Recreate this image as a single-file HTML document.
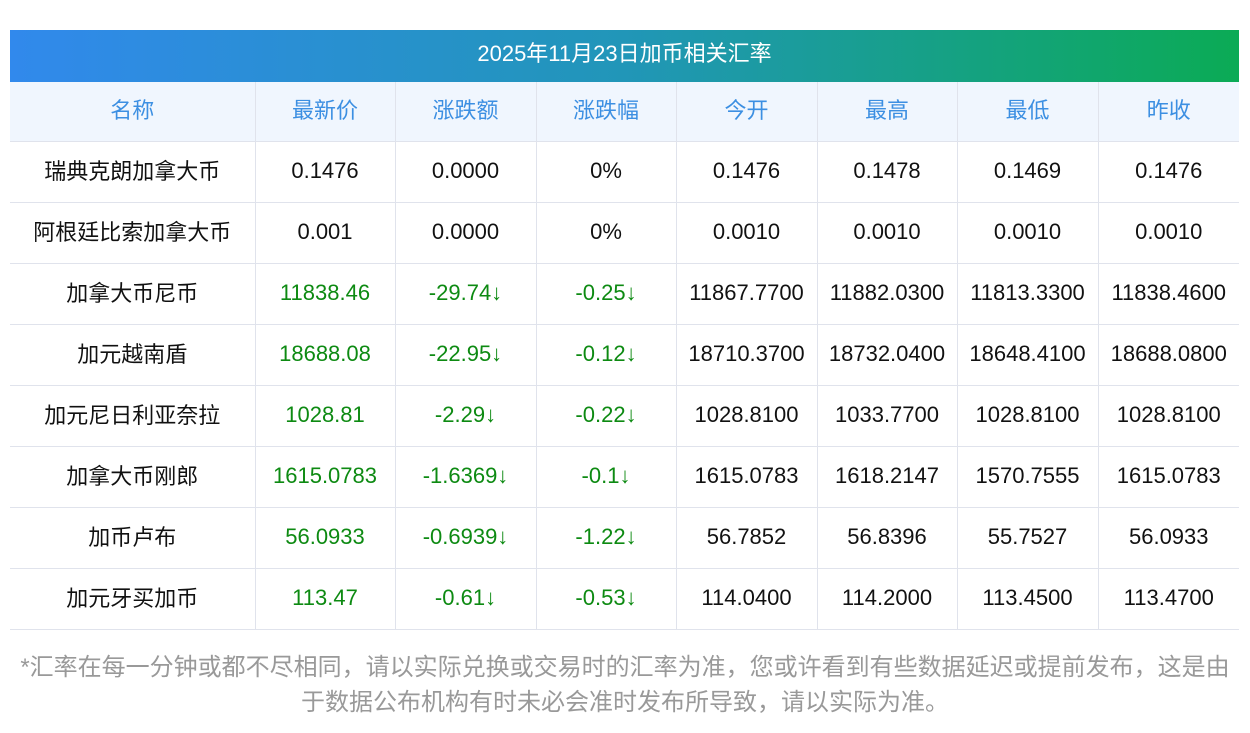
<!DOCTYPE html>
<html><head><meta charset="utf-8"><style>
body{margin:0;background:#fff;width:1250px;height:733px;overflow:hidden;font-family:"Liberation Sans","Noto Sans CJK SC",sans-serif;}
.title{position:absolute;left:10px;top:30px;width:1229px;height:52px;background:linear-gradient(90deg,#3189ec,#2196b8 50%,#0bab55);color:#fff;font-size:22px;line-height:48px;text-align:center;}
table{position:absolute;left:10px;top:82px;width:1229px;border-collapse:collapse;table-layout:fixed;}
td{height:60px;border-bottom:1px solid #e0e3ec;border-left:1px solid #e0e3ec;text-align:center;font-size:22px;line-height:24px;color:#111;padding:0;overflow:hidden;}
td span{position:relative;top:-1px;}
td:first-child{border-left:none;}
td:first-child span{top:0px;}
tr.h td span{top:-1px;}
tr.h td{background:#f0f6fe;color:#3c8fe2;height:59px;}
.g{color:#0d8a12;}
.foot{position:absolute;left:0;top:650px;width:1250px;text-align:center;color:#999;font-size:24px;line-height:35px;}
</style></head><body>
<div class="title">2025年11月23日加币相关汇率</div>
<table>
<colgroup><col style="width:245px"><col style="width:140px"><col style="width:141px"><col style="width:140px"><col style="width:141px"><col style="width:140px"><col style="width:141px"><col style="width:141px"></colgroup>
<tr class="h"><td><span>名称</span></td><td><span>最新价</span></td><td><span>涨跌额</span></td><td><span>涨跌幅</span></td><td><span>今开</span></td><td><span>最高</span></td><td><span>最低</span></td><td><span>昨收</span></td></tr>
<tr><td><span>瑞典克朗加拿大币</span></td><td><span>0.1476</span></td><td><span>0.0000</span></td><td><span>0%</span></td><td><span>0.1476</span></td><td><span>0.1478</span></td><td><span>0.1469</span></td><td><span>0.1476</span></td></tr>
<tr><td><span>阿根廷比索加拿大币</span></td><td><span>0.001</span></td><td><span>0.0000</span></td><td><span>0%</span></td><td><span>0.0010</span></td><td><span>0.0010</span></td><td><span>0.0010</span></td><td><span>0.0010</span></td></tr>
<tr><td><span>加拿大币尼币</span></td><td class="g"><span>11838.46</span></td><td class="g"><span>-29.74↓</span></td><td class="g"><span>-0.25↓</span></td><td><span>11867.7700</span></td><td><span>11882.0300</span></td><td><span>11813.3300</span></td><td><span>11838.4600</span></td></tr>
<tr><td><span>加元越南盾</span></td><td class="g"><span>18688.08</span></td><td class="g"><span>-22.95↓</span></td><td class="g"><span>-0.12↓</span></td><td><span>18710.3700</span></td><td><span>18732.0400</span></td><td><span>18648.4100</span></td><td><span>18688.0800</span></td></tr>
<tr><td><span>加元尼日利亚奈拉</span></td><td class="g"><span>1028.81</span></td><td class="g"><span>-2.29↓</span></td><td class="g"><span>-0.22↓</span></td><td><span>1028.8100</span></td><td><span>1033.7700</span></td><td><span>1028.8100</span></td><td><span>1028.8100</span></td></tr>
<tr><td><span>加拿大币刚郎</span></td><td class="g"><span>1615.0783</span></td><td class="g"><span>-1.6369↓</span></td><td class="g"><span>-0.1↓</span></td><td><span>1615.0783</span></td><td><span>1618.2147</span></td><td><span>1570.7555</span></td><td><span>1615.0783</span></td></tr>
<tr><td><span>加币卢布</span></td><td class="g"><span>56.0933</span></td><td class="g"><span>-0.6939↓</span></td><td class="g"><span>-1.22↓</span></td><td><span>56.7852</span></td><td><span>56.8396</span></td><td><span>55.7527</span></td><td><span>56.0933</span></td></tr>
<tr><td><span>加元牙买加币</span></td><td class="g"><span>113.47</span></td><td class="g"><span>-0.61↓</span></td><td class="g"><span>-0.53↓</span></td><td><span>114.0400</span></td><td><span>114.2000</span></td><td><span>113.4500</span></td><td><span>113.4700</span></td></tr>
</table>
<div class="foot">*汇率在每一分钟或都不尽相同，请以实际兑换或交易时的汇率为准，您或许看到有些数据延迟或提前发布，这是由<br>于数据公布机构有时未必会准时发布所导致，请以实际为准。</div>
</body></html>
